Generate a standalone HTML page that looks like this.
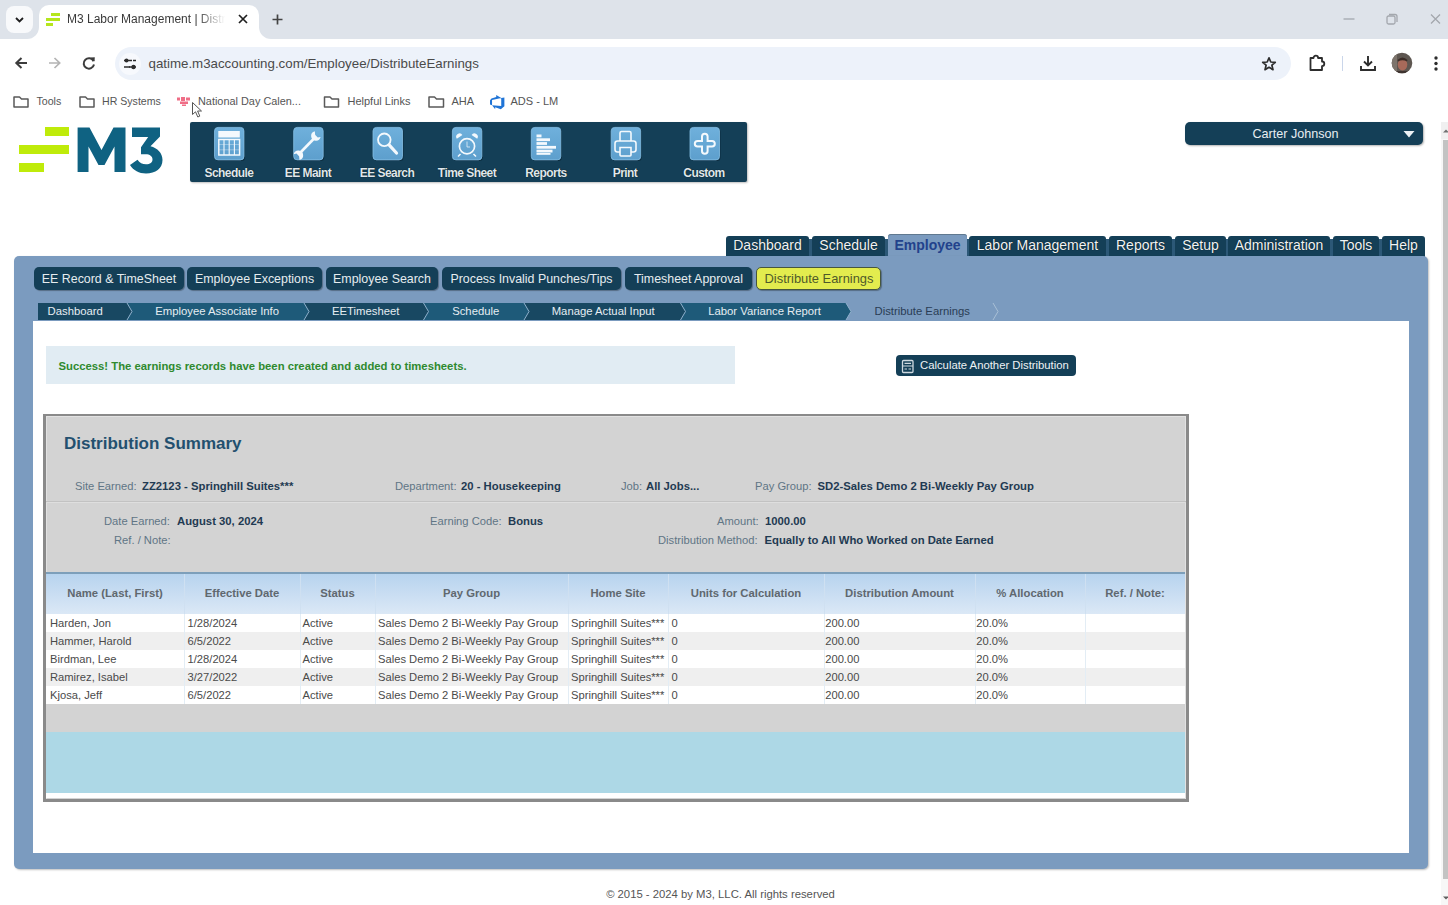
<!DOCTYPE html>
<html><head><meta charset="utf-8">
<style>
*{margin:0;padding:0;box-sizing:border-box}
html,body{width:1448px;height:905px;overflow:hidden}
body{position:relative;font-family:"Liberation Sans",sans-serif;background:#fff;color:#333}
.a{position:absolute}
.t{position:absolute;white-space:nowrap}
/* chrome */
#strip{left:0;top:0;width:1448px;height:39px;background:#dee3ea}
#acttab{left:39px;top:5px;width:220px;height:35px;background:#fff;border-radius:10px 10px 0 0}
#addr{left:0;top:39px;width:1448px;height:46px;background:#fff}
#omni{left:115px;top:47px;width:1176px;height:33px;background:#edf2fa;border-radius:17px}
/* app */
.nav{background:#143f57}
#toolbar{left:190px;top:122px;width:557px;height:60px;background:#143f57;border-radius:2px;box-shadow:1px 1px 2px rgba(0,0,0,.25)}
.ico{position:absolute;top:5px;width:29px;height:32px;background:#5b9bc6;border-radius:4px;box-shadow:1px 1px 1px rgba(0,0,0,.35)}
.lbl{position:absolute;top:44px;font-size:12px;font-weight:bold;letter-spacing:-0.55px;color:#dfe7ec;white-space:nowrap;text-align:center;width:80px;text-shadow:0 0 1px #000;line-height:15px}
#user{left:1185px;top:122px;width:238px;height:23px;background:#143f57;border-radius:5px;color:#e8eef2;font-size:12.6px;line-height:23px;text-align:center;box-shadow:1px 1px 2px rgba(0,0,0,.3)}
#panel{left:14px;top:256px;width:1414px;height:613px;background:#7b9bbf;border-radius:5px;box-shadow:1px 1px 2px rgba(0,0,0,.25)}
#content{left:33px;top:321px;width:1376px;height:532px;background:#fff}
.mt{position:absolute;top:236px;height:21px;background:#143f57;border-radius:3px 3px 0 0;color:#f0f4f6;font-size:14px;line-height:19px;text-align:center;text-shadow:0 0 1px #000}
.mt.on{background:#7b9bbf;color:#22428c;top:234px;height:23px;text-shadow:none;line-height:22px;font-weight:bold;box-shadow:inset 0 1px 0 #60798f}
.sb{position:absolute;top:267px;height:23px;background:#143f57;border-radius:5px;color:#e6ecef;font-size:12.4px;line-height:24px;text-align:center;box-shadow:1px 1px 1px rgba(0,0,0,.3)}
.sb.on{background:#e3ec4e;color:#4f5a2a;border:1px solid #46563e;line-height:21px;font-size:12.9px;text-indent:1px}

.bc{position:absolute;top:304px;font-size:11.3px;line-height:15px;color:#e6edf2;white-space:nowrap}
#success{left:46px;top:346px;width:689px;height:38px;background:#e1ecf3}
#success span{position:absolute;left:12.5px;top:13px;font-size:11.3px;font-weight:bold;color:#2f8a2f;white-space:nowrap;line-height:14px}
#calc{left:896px;top:355px;width:180px;height:21px;background:#143f57;border-radius:4px;color:#eef2f4;font-size:11.3px;line-height:21px}
#box{left:43px;top:414px;width:1146px;height:388px;background:#d3d3d3;border-style:solid;border-color:#8a8a8a;border-width:2px 3px 3px 3px;box-shadow:inset 1px 1px 0 #e2e2e2, inset -1px 0 0 #e2e2e2}
.lb{position:absolute;font-size:11.2px;color:#607585;white-space:nowrap;line-height:14px}
.vl{position:absolute;font-size:11.3px;font-weight:bold;color:#1f3a52;white-space:nowrap;line-height:14px}
.th{position:absolute;top:586px;font-size:11.3px;font-weight:bold;color:#60686f;white-space:nowrap;text-align:center;line-height:14px}
.td{position:absolute;font-size:11.2px;color:#4a4a4a;white-space:nowrap;line-height:14px}
#footer{left:0;top:887px;width:1441px;text-align:center;font-size:11.3px;color:#555;line-height:14px;padding-left:-0px}
</style></head><body>
<!-- Chrome tab strip -->
<div class="a" id="strip"></div>
<div class="a" id="acttab"></div>
<div class="a" id="addr"></div>
<div class="a" id="omni"></div>

<!-- tab flares -->
<div class="a" style="left:27px;top:27px;width:12px;height:12px;background:#fff"></div>
<div class="a" style="left:27px;top:27px;width:12px;height:12px;background:#dee3ea;border-radius:0 0 12px 0"></div>
<div class="a" style="left:259px;top:27px;width:12px;height:12px;background:#fff"></div>
<div class="a" style="left:259px;top:27px;width:12px;height:12px;background:#dee3ea;border-radius:0 0 0 12px"></div>
<!-- tab dropdown -->
<div class="a" style="left:6px;top:6px;width:27px;height:27px;background:#f8f9fb;border-radius:8px"></div>
<svg class="a" style="left:13px;top:13px" width="13" height="13" viewBox="0 0 13 13"><path d="M3 5 L6.5 8.5 L10 5" fill="none" stroke="#1f1f1f" stroke-width="1.8"/></svg>
<!-- favicon -->
<svg class="a" style="left:45px;top:12px" width="16" height="15" viewBox="0 0 16 15"><rect x="6" y="1" width="9" height="3" fill="#b5e61d"/><rect x="1" y="6" width="14" height="3" fill="#b5e61d"/><rect x="1" y="11" width="7" height="3" fill="#b5e61d"/></svg>
<div class="t" style="left:67px;top:12px;font-size:12px;line-height:15px;color:#3a3a3a;width:160px;overflow:hidden;-webkit-mask-image:linear-gradient(90deg,#000 130px,transparent 158px)">M3 Labor Management | Distribute Earnings</div>
<svg class="a" style="left:237px;top:13px" width="12" height="12" viewBox="0 0 12 12"><path d="M2 2 L10 10 M10 2 L2 10" stroke="#1f1f1f" stroke-width="1.7"/></svg>
<svg class="a" style="left:271px;top:13px" width="13" height="13" viewBox="0 0 13 13"><path d="M6.5 1.5 V11.5 M1.5 6.5 H11.5" stroke="#444" stroke-width="1.7"/></svg>
<!-- window controls -->
<svg class="a" style="left:1340px;top:10px" width="104" height="18" viewBox="0 0 104 18"><path d="M3.5 9 H14.5" stroke="#a3a7ad" stroke-width="1.3"/><rect x="47" y="6" width="8" height="8" rx="1.5" fill="none" stroke="#a3a7ad" stroke-width="1.3"/><path d="M49 4.5 H55 a2 2 0 0 1 2 2 V12" fill="none" stroke="#a3a7ad" stroke-width="1.3"/><path d="M91 4.5 L100 13.5 M100 4.5 L91 13.5" stroke="#a3a7ad" stroke-width="1.3"/></svg>
<!-- nav buttons -->
<svg class="a" style="left:13px;top:55px" width="16" height="16" viewBox="0 0 16 16"><path d="M14 8 H3.5 M8.5 3 L3.3 8 L8.5 13" fill="none" stroke="#3c3c3c" stroke-width="2"/></svg>
<svg class="a" style="left:47px;top:55px" width="16" height="16" viewBox="0 0 16 16"><path d="M2 8 H12.5 M7.5 3 L12.7 8 L7.5 13" fill="none" stroke="#b4b4b4" stroke-width="1.7"/></svg>
<svg class="a" style="left:81px;top:55px" width="16" height="16" viewBox="0 0 16 16"><path d="M12.6 6.2 A5.2 5.2 0 1 0 13 9.5" fill="none" stroke="#3c3c3c" stroke-width="2"/><path d="M9.5 2.5 L13.8 2.2 L13.5 6.5 Z" fill="#3c3c3c"/></svg>
<div class="a" style="left:119px;top:53px;width:22px;height:22px;border-radius:11px;background:#f7f9fd"></div>
<svg class="a" style="left:122px;top:56px" width="16" height="16" viewBox="0 0 16 16"><path d="M2 4.5 H10 M2 11 H8" stroke="#2d2d2d" stroke-width="1.6"/><circle cx="4.5" cy="4.5" r="2" fill="#2d2d2d"/><path d="M7 11 H14 M11 4.5 H14" stroke="#2d2d2d" stroke-width="1.6"/><circle cx="11.5" cy="11" r="2.2" fill="#2d2d2d"/></svg>
<div class="t" style="left:148.5px;top:56px;font-size:13.3px;line-height:16px;color:#4a4a4a">qatime.m3accounting.com/Employee/DistributeEarnings</div>
<!-- right icons -->
<svg class="a" style="left:1261px;top:56px" width="16" height="16" viewBox="0 0 16 16"><path d="M8 1.8 L9.8 6 L14.3 6.3 L10.9 9.2 L12 13.7 L8 11.3 L4 13.7 L5.1 9.2 L1.7 6.3 L6.2 6 Z" fill="none" stroke="#2d2d2d" stroke-width="1.7" stroke-linejoin="round"/></svg>
<svg class="a" style="left:1308px;top:53px" width="19" height="19" viewBox="0 0 19 19"><path d="M2.5 5 H5.5 a2.3 2.3 0 0 1 4.6 0 H14 V8.5 a2.3 2.3 0 0 1 0 4.6 V17 H2.5 Z" fill="none" stroke="#2d2d2d" stroke-width="1.8" stroke-linejoin="round"/></svg>
<div class="a" style="left:1342px;top:56px;width:1px;height:15px;background:#cad6ea"></div>
<svg class="a" style="left:1359px;top:54px" width="18" height="18" viewBox="0 0 18 18"><path d="M9 2 V11 M5 7.5 L9 11.5 L13 7.5" fill="none" stroke="#2d2d2d" stroke-width="1.9"/><path d="M2 12 V16 H16 V12" fill="none" stroke="#2d2d2d" stroke-width="1.9"/></svg>
<svg class="a" style="left:1391px;top:52px" width="22" height="22" viewBox="0 0 22 22"><defs><clipPath id="av"><circle cx="11" cy="11" r="10.3"/></clipPath></defs><g clip-path="url(#av)"><rect width="22" height="22" fill="#5e5751"/><rect x="0" y="0" width="6" height="22" fill="#7d746c"/><ellipse cx="11.5" cy="12.5" rx="4.8" ry="6" fill="#a86a5a"/><path d="M6.5 8 Q11.5 3 16.5 8 L16 9.5 Q11.5 7 7 9.5 Z" fill="#3b2c26"/><rect x="5" y="19" width="13" height="4" fill="#3e3430"/></g></svg>
<svg class="a" style="left:1432px;top:55px" width="8" height="17" viewBox="0 0 8 17"><circle cx="4" cy="3" r="1.7" fill="#2d2d2d"/><circle cx="4" cy="8.5" r="1.7" fill="#2d2d2d"/><circle cx="4" cy="14" r="1.7" fill="#2d2d2d"/></svg>
<!-- bookmarks -->
<svg class="a" style="left:0;top:90px" width="600" height="24" viewBox="0 90 600 24">
<g fill="none" stroke="#5a5a5a" stroke-width="1.5" stroke-linejoin="round">
<path d="M14 97 H19.5 L21.5 99 H28 V107 H14 Z"/>
<path d="M80 97 H85.5 L87.5 99 H94 V107 H80 Z"/>
<path d="M324.5 97 H330 L332 99 H338.5 V107 H324.5 Z"/>
<path d="M429 97 H434.5 L436.5 99 H443.5 V107 H429 Z"/>
</g>
<g transform="translate(489.5,94.5) scale(0.85)"><path d="M17.5 3.6v10.3l-4.2 3.5-6.6-2.4v2.4l-3.7-4.9 10.8.9V4.2zm-3.6.5L7.9.5v2.4L2.3 4.6.6 6.8v4.9l2.4 1V6.4z" fill="#1f74d6"/></g>
<g fill="#ef6d86"><rect x="177" y="97.5" width="3" height="3"/><rect x="181" y="97" width="4" height="4"/><rect x="186" y="97.5" width="4" height="3"/><rect x="180" y="101.5" width="8" height="2.5"/><rect x="182" y="104.5" width="4" height="1.5"/></g>
</svg>
<div class="t" style="left:36.5px;top:94px;font-size:10.6px;line-height:15px;color:#555">Tools</div>
<div class="t" style="left:102px;top:94px;font-size:10.6px;line-height:15px;color:#555">HR Systems</div>
<div class="t" style="left:198px;top:94px;font-size:10.9px;line-height:15px;color:#555">National Day Calen...</div>
<div class="t" style="left:347.5px;top:94px;font-size:11px;line-height:15px;color:#555">Helpful Links</div>
<div class="t" style="left:451.5px;top:94px;font-size:11px;line-height:15px;color:#555">AHA</div>
<div class="t" style="left:510.5px;top:94px;font-size:11px;line-height:15px;color:#555">ADS - LM</div>
<!-- cursor -->
<svg class="a" style="left:191px;top:101px" width="14" height="18" viewBox="0 0 14 18"><path d="M1.5 1.5 V13.5 L4.5 10.8 L6.8 16 L8.8 15.1 L6.6 10 H10.5 Z" fill="#fff" stroke="#555" stroke-width="1"/></svg>


<!-- Logo -->
<div class="a" style="left:45px;top:127px;width:24px;height:9px;background:#bfeb0a"></div>
<div class="a" style="left:19px;top:145px;width:50px;height:9px;background:#bfeb0a"></div>
<div class="a" style="left:19px;top:163px;width:25px;height:9px;background:#bfeb0a"></div>

<svg class="a" style="left:70px;top:120px" width="100" height="60" viewBox="70 120 100 60">
<path d="M77.6 172 V127.5 H89.5 L101.5 150 L113.5 127.5 H125.5 V172 H114.5 V146.5 L104.5 165 H98.5 L88.5 146.5 V172 Z" fill="#0f6282"/>
<path d="M132 127.5 H160 V136.5 L150.5 146.3 C157.5 148 162.5 153.2 162.5 160 C162.5 168.5 155.5 173.5 146 173.5 C139 173.5 133.5 170.5 130 165 L137.5 159.8 C139.5 162.8 142.5 164.3 146 164.3 C150.2 164.3 152.5 162.4 152.5 159.5 C152.5 156.3 150 154.3 145.5 154.3 H141 V147.2 L148.2 137 H132 Z" fill="#0f6282"/>
</svg>
<!-- Toolbar -->
<div class="a" id="toolbar"><svg class="a" style="left:0;top:0" width="557" height="60" viewBox="190 122 557 60"><defs><linearGradient id="ig" x1="0" y1="0" x2="0" y2="1"><stop offset="0" stop-color="#6fb0dc"/><stop offset="1" stop-color="#5d9fcd"/></linearGradient></defs><rect x="215.5" y="128.5" width="29.5" height="32.5" rx="3.5" fill="#0a2636" opacity=".7"/><rect x="214.5" y="127.4" width="29.5" height="32.5" rx="3.5" fill="url(#ig)" stroke="#86c0e6" stroke-width=".8"/><rect x="294.7" y="128.5" width="29.5" height="32.5" rx="3.5" fill="#0a2636" opacity=".7"/><rect x="293.7" y="127.4" width="29.5" height="32.5" rx="3.5" fill="url(#ig)" stroke="#86c0e6" stroke-width=".8"/><rect x="374" y="128.5" width="29.5" height="32.5" rx="3.5" fill="#0a2636" opacity=".7"/><rect x="373" y="127.4" width="29.5" height="32.5" rx="3.5" fill="url(#ig)" stroke="#86c0e6" stroke-width=".8"/><rect x="453.4" y="128.5" width="29.5" height="32.5" rx="3.5" fill="#0a2636" opacity=".7"/><rect x="452.4" y="127.4" width="29.5" height="32.5" rx="3.5" fill="url(#ig)" stroke="#86c0e6" stroke-width=".8"/><rect x="532.3" y="128.5" width="29.5" height="32.5" rx="3.5" fill="#0a2636" opacity=".7"/><rect x="531.3" y="127.4" width="29.5" height="32.5" rx="3.5" fill="url(#ig)" stroke="#86c0e6" stroke-width=".8"/><rect x="612.2" y="128.5" width="29.5" height="32.5" rx="3.5" fill="#0a2636" opacity=".7"/><rect x="611.2" y="127.4" width="29.5" height="32.5" rx="3.5" fill="url(#ig)" stroke="#86c0e6" stroke-width=".8"/><rect x="691" y="128.5" width="29.5" height="32.5" rx="3.5" fill="#0a2636" opacity=".7"/><rect x="690" y="127.4" width="29.5" height="32.5" rx="3.5" fill="url(#ig)" stroke="#86c0e6" stroke-width=".8"/>
<g fill="none" stroke="#f4f9fd">
<!-- calendar -->
<rect x="218.3" y="131" width="21.5" height="6.5" fill="#f4f9fd" stroke="none"/>
<rect x="218.8" y="139.5" width="20.8" height="15.5" stroke-width="1.5"/>
<path d="M224 139.5 V155 M229.2 139.5 V155 M234.4 139.5 V155" stroke-width="1.1"/>
<path d="M218.8 144.5 H239.6 M218.8 149.8 H239.6" stroke-width=".6" opacity=".6"/>
<!-- wrench -->
<path d="M298.5 154.5 L316 136.5" stroke-width="2.6"/>
<path d="M314.8 131.2 a4.8 4.8 0 1 0 5.8 5.8 l-2.8 .6 -2.6-2.6 z" fill="#f4f9fd" stroke="none"/>
<path d="M299.5 160 a4.8 4.8 0 1 0 -5.8 -5.8 l2.8 -.6 2.6 2.6 z" fill="#f4f9fd" stroke="none"/>
<!-- search -->
<circle cx="384.3" cy="139.8" r="6.3" stroke-width="1.8"/>
<path d="M389.3 145.2 L396.5 153" stroke-width="3.2" stroke-linecap="round"/>
<!-- clock -->
<circle cx="467" cy="146.3" r="7.6" stroke-width="1.7"/>
<path d="M467 141.5 V147 H470" stroke-width="1" opacity=".7"/>
<path d="M456.8 138.8 a3.3 3.3 0 0 1 5.6 -3.8 z M477.2 138.8 a3.3 3.3 0 0 0 -5.6 -3.8 z" fill="#f4f9fd" stroke="none"/>
<path d="M460.5 154 L458 156.5 M473.5 154 L476 156.5" stroke-width="1.5"/>
<!-- reports -->
<g fill="#f4f9fd" stroke="none">
<rect x="536.5" y="134.5" width="5" height="2.8"/>
<rect x="536.5" y="138.3" width="13.5" height="2.8"/>
<rect x="536.5" y="142.1" width="10.5" height="2.8"/>
<rect x="536.5" y="145.9" width="19.5" height="2.8"/>
<rect x="536.5" y="149.7" width="16" height="2.8"/>
<rect x="536.5" y="153" width="14" height="1.8"/>
</g>
<!-- print -->
<path d="M620 141 V133 a1.5 1.5 0 0 1 1.5 -1.5 h8 a1.5 1.5 0 0 1 1.5 1.5 V141" stroke-width="1.6"/>
<path d="M620 152 h-2.5 a2.5 2.5 0 0 1 -2.5 -2.5 v-6 a2.5 2.5 0 0 1 2.5 -2.5 h16 a2.5 2.5 0 0 1 2.5 2.5 v6 a2.5 2.5 0 0 1 -2.5 2.5 h-2.5" stroke-width="1.6"/>
<path d="M620 147.5 h11 v7.5 a1 1 0 0 1 -1 1 h-9 a1 1 0 0 1 -1 -1 z" stroke-width="1.6"/>
<!-- custom plus -->
<path d="M702 136.5 a2.8 2.8 0 0 1 5.6 0 V140.9 H712 a2.8 2.8 0 0 1 0 5.6 H707.6 V151 a2.8 2.8 0 0 1 -5.6 0 V146.5 H697.6 a2.8 2.8 0 0 1 0 -5.6 H702 Z" stroke-width="2"/>
</g></svg>
  <div class="lbl" style="left:-1px">Schedule</div>
  <div class="lbl" style="left:78px">EE Maint</div>
  <div class="lbl" style="left:157px">EE Search</div>
  <div class="lbl" style="left:237px">Time Sheet</div>
  <div class="lbl" style="left:316px">Reports</div>
  <div class="lbl" style="left:395px">Print</div>
  <div class="lbl" style="left:474px">Custom</div>
</div>

<div class="a" id="user"><span class="t" style="left:67.5px;top:1px">Carter Johnson</span></div>

<!-- Main tabs -->
<div class="a" style="left:727px;top:239px;width:697px;height:18px;background:#2c5877"></div>
<div class="mt" style="left:726px;width:83px">Dashboard</div>
<div class="mt" style="left:812px;width:73px">Schedule</div>
<div class="mt on" style="left:888px;width:79px">Employee</div>
<div class="mt" style="left:969px;width:137px">Labor Management</div>
<div class="mt" style="left:1109px;width:63px">Reports</div>
<div class="mt" style="left:1175px;width:51px">Setup</div>
<div class="mt" style="left:1228px;width:102px">Administration</div>
<div class="mt" style="left:1333px;width:46px">Tools</div>
<div class="mt" style="left:1382px;width:43px">Help</div>

<div class="a" id="panel"></div>
<div class="a" id="content"></div>

<!-- Sub buttons -->
<div class="sb" style="left:34px;width:150px">EE Record &amp; TimeSheet</div>
<div class="sb" style="left:187px;width:135px">Employee Exceptions</div>
<div class="sb" style="left:326px;width:112px">Employee Search</div>
<div class="sb" style="left:442px;width:179px">Process Invalid Punches/Tips</div>
<div class="sb" style="left:625px;width:127px">Timesheet Approval</div>
<div class="sb on" style="left:756px;width:125px">Distribute Earnings</div>

<svg class="a" style="left:0;top:300px" width="1010" height="24" viewBox="0 300 1010 24"><polygon points="680.2,303 846,303 851,311.5 846,320 680.2,320" fill="#1e5a79"/><polygon points="523.9,303 680.5,303 685.5,311.5 680.5,320 523.9,320" fill="#184862"/><polygon points="423.4,303 524,303 529,311.5 524,320 423.4,320" fill="#1e5a79"/><polygon points="303.6,303 423.5,303 428.5,311.5 423.5,320 303.6,320" fill="#184862"/><polygon points="126.5,303 304,303 309,311.5 304,320 126.5,320" fill="#1e5a79"/><polygon points="38,303 127,303 132,311.5 127,320 38,320" fill="#184862"/><polyline points="127,303 132,311.5 127,320" fill="none" stroke="#8fb0cc" stroke-width="1"/><polyline points="304,303 309,311.5 304,320" fill="none" stroke="#8fb0cc" stroke-width="1"/><polyline points="423.5,303 428.5,311.5 423.5,320" fill="none" stroke="#8fb0cc" stroke-width="1"/><polyline points="524,303 529,311.5 524,320" fill="none" stroke="#8fb0cc" stroke-width="1"/><polyline points="680.5,303 685.5,311.5 680.5,320" fill="none" stroke="#8fb0cc" stroke-width="1"/><polyline points="846,303 851,311.5 846,320" fill="none" stroke="#8fb0cc" stroke-width="1"/><polyline points="993,303 998,311.5 993,320" fill="none" stroke="#a9c0d6" stroke-width="1"/></svg>
<div class="bc" style="left:47.6px">Dashboard</div><div class="bc" style="left:155.3px">Employee Associate Info</div><div class="bc" style="left:332px">EETimesheet</div><div class="bc" style="left:452.2px">Schedule</div><div class="bc" style="left:551.7px">Manage Actual Input</div><div class="bc" style="left:708.2px">Labor Variance Report</div><div class="bc" style="left:874.5px;color:#2a3d55;text-shadow:none">Distribute Earnings</div>
<div class="a" id="success"><span>Success! The earnings records have been created and added to timesheets.</span></div>
<div class="a" id="calc"><span class="t" style="left:24px;top:0">Calculate Another Distribution</span></div>
<div class="a" id="box"></div>
<div class="t" style="left:64px;top:434px;font-size:17px;font-weight:bold;color:#23506f;line-height:20px">Distribution Summary</div>
<div class="lb" style="left:75px;top:479px">Site Earned:</div><div class="vl" style="left:142px;top:479px">ZZ2123 - Springhill Suites***</div>
<div class="lb" style="left:395px;top:479px">Department:</div><div class="vl" style="left:461px;top:479px">20 - Housekeeping</div>
<div class="lb" style="left:621px;top:479px">Job:</div><div class="vl" style="left:646px;top:479px">All Jobs...</div>
<div class="lb" style="left:755px;top:479px">Pay Group:</div><div class="vl" style="left:817.5px;top:479px">SD2-Sales Demo 2 Bi-Weekly Pay Group</div>
<div class="a" style="left:46px;top:501px;width:1140px;height:1px;background:#c2c2c2"></div>
<div class="a" style="left:46px;top:502px;width:1140px;height:1px;background:#dedede"></div>
<div class="lb" style="left:104px;top:514px">Date Earned:</div><div class="vl" style="left:177px;top:514px">August 30, 2024</div>
<div class="lb" style="left:114px;top:533px">Ref. / Note:</div>
<div class="lb" style="left:430px;top:514px">Earning Code:</div><div class="vl" style="left:508px;top:514px">Bonus</div>
<div class="lb" style="left:717px;top:514px">Amount:</div><div class="vl" style="left:765px;top:514px">1000.00</div>
<div class="lb" style="left:658px;top:533px">Distribution Method:</div><div class="vl" style="left:764.5px;top:533px">Equally to All Who Worked on Date Earned</div>
<div class="a" style="left:46px;top:572px;width:1139px;height:2px;background:#7d9fba"></div><div class="a" style="left:46px;top:574px;width:1139px;height:40px;background:linear-gradient(#b7d3ee,#dbe8f6)"></div><div class="a" style="left:184px;top:574px;width:1px;height:40px;background:#cfe0f1"></div><div class="a" style="left:300px;top:574px;width:1px;height:40px;background:#cfe0f1"></div><div class="a" style="left:375px;top:574px;width:1px;height:40px;background:#cfe0f1"></div><div class="a" style="left:568px;top:574px;width:1px;height:40px;background:#cfe0f1"></div><div class="a" style="left:668px;top:574px;width:1px;height:40px;background:#cfe0f1"></div><div class="a" style="left:824px;top:574px;width:1px;height:40px;background:#cfe0f1"></div><div class="a" style="left:975px;top:574px;width:1px;height:40px;background:#cfe0f1"></div><div class="a" style="left:1085px;top:574px;width:1px;height:40px;background:#cfe0f1"></div><div class="th" style="left:46px;width:138px">Name (Last, First)</div><div class="th" style="left:184px;width:116px">Effective Date</div><div class="th" style="left:300px;width:75px">Status</div><div class="th" style="left:375px;width:193px">Pay Group</div><div class="th" style="left:568px;width:100px">Home Site</div><div class="th" style="left:668px;width:156px">Units for Calculation</div><div class="th" style="left:824px;width:151px">Distribution Amount</div><div class="th" style="left:975px;width:110px">% Allocation</div><div class="th" style="left:1085px;width:100px">Ref. / Note:</div><div class="a" style="left:46px;top:614px;width:1139px;height:18px;background:#ffffff"></div><div class="a" style="left:46px;top:632px;width:1139px;height:18px;background:#efefef"></div><div class="a" style="left:46px;top:650px;width:1139px;height:18px;background:#ffffff"></div><div class="a" style="left:46px;top:668px;width:1139px;height:18px;background:#efefef"></div><div class="a" style="left:46px;top:686px;width:1139px;height:18px;background:#ffffff"></div><div class="a" style="left:184px;top:614px;width:1px;height:90px;background:#e3edf5"></div><div class="a" style="left:300px;top:614px;width:1px;height:90px;background:#e3edf5"></div><div class="a" style="left:375px;top:614px;width:1px;height:90px;background:#e3edf5"></div><div class="a" style="left:568px;top:614px;width:1px;height:90px;background:#e3edf5"></div><div class="a" style="left:668px;top:614px;width:1px;height:90px;background:#e3edf5"></div><div class="a" style="left:824px;top:614px;width:1px;height:90px;background:#e3edf5"></div><div class="a" style="left:975px;top:614px;width:1px;height:90px;background:#e3edf5"></div><div class="a" style="left:1085px;top:614px;width:1px;height:90px;background:#e3edf5"></div><div class="td" style="left:50px;top:616px">Harden, Jon</div><div class="td" style="left:187.5px;top:616px">1/28/2024</div><div class="td" style="left:302.5px;top:616px">Active</div><div class="td" style="left:378px;top:616px">Sales Demo 2 Bi-Weekly Pay Group</div><div class="td" style="left:571px;top:616px">Springhill Suites***</div><div class="td" style="left:671.5px;top:616px">0</div><div class="td" style="left:825.2px;top:616px">200.00</div><div class="td" style="left:976.3px;top:616px">20.0%</div><div class="td" style="left:50px;top:634px">Hammer, Harold</div><div class="td" style="left:187.5px;top:634px">6/5/2022</div><div class="td" style="left:302.5px;top:634px">Active</div><div class="td" style="left:378px;top:634px">Sales Demo 2 Bi-Weekly Pay Group</div><div class="td" style="left:571px;top:634px">Springhill Suites***</div><div class="td" style="left:671.5px;top:634px">0</div><div class="td" style="left:825.2px;top:634px">200.00</div><div class="td" style="left:976.3px;top:634px">20.0%</div><div class="td" style="left:50px;top:652px">Birdman, Lee</div><div class="td" style="left:187.5px;top:652px">1/28/2024</div><div class="td" style="left:302.5px;top:652px">Active</div><div class="td" style="left:378px;top:652px">Sales Demo 2 Bi-Weekly Pay Group</div><div class="td" style="left:571px;top:652px">Springhill Suites***</div><div class="td" style="left:671.5px;top:652px">0</div><div class="td" style="left:825.2px;top:652px">200.00</div><div class="td" style="left:976.3px;top:652px">20.0%</div><div class="td" style="left:50px;top:670px">Ramirez, Isabel</div><div class="td" style="left:187.5px;top:670px">3/27/2022</div><div class="td" style="left:302.5px;top:670px">Active</div><div class="td" style="left:378px;top:670px">Sales Demo 2 Bi-Weekly Pay Group</div><div class="td" style="left:571px;top:670px">Springhill Suites***</div><div class="td" style="left:671.5px;top:670px">0</div><div class="td" style="left:825.2px;top:670px">200.00</div><div class="td" style="left:976.3px;top:670px">20.0%</div><div class="td" style="left:50px;top:688px">Kjosa, Jeff</div><div class="td" style="left:187.5px;top:688px">6/5/2022</div><div class="td" style="left:302.5px;top:688px">Active</div><div class="td" style="left:378px;top:688px">Sales Demo 2 Bi-Weekly Pay Group</div><div class="td" style="left:571px;top:688px">Springhill Suites***</div><div class="td" style="left:671.5px;top:688px">0</div><div class="td" style="left:825.2px;top:688px">200.00</div><div class="td" style="left:976.3px;top:688px">20.0%</div><div class="a" style="left:46px;top:704px;width:1139px;height:28px;background:#d3d3d3"></div><div class="a" style="left:46px;top:732px;width:1139px;height:61px;background:#add8e6"></div><div class="a" style="left:46px;top:793px;width:1139px;height:5px;background:#fff"></div><div class="a" id="footer">© 2015 - 2024 by M3, LLC. All rights reserved</div>

<!-- user triangle -->
<svg class="a" style="left:1402px;top:129px" width="14" height="10" viewBox="0 0 14 10"><path d="M1.5 2 H12.5 L7 8.5 Z" fill="#eef2f5"/></svg>
<!-- calc icon -->
<svg class="a" style="left:900px;top:358px" width="16" height="16" viewBox="0 0 16 16"><rect x="2.5" y="2.5" width="10.5" height="12" rx="1" fill="none" stroke="#cfd9e0" stroke-width="1.3"/><path d="M2.5 8 H13 M4.5 11 H7 M8.5 11 H11 M4.5 5.3 H11" stroke="#cfd9e0" stroke-width="1.2"/></svg>
<!-- scrollbar -->
<div class="a" style="left:1441px;top:122px;width:7px;height:783px;background:#f7f7f7"></div>
<div class="a" style="left:1442.5px;top:140px;width:5.5px;height:739px;background:#c3c3c3"></div>
<div class="a" style="left:1441px;top:122px;width:7px;height:17px;background:#f0f0f0"></div><svg class="a" style="left:1442px;top:127px" width="6" height="8" viewBox="0 0 6 8"><path d="M1 5.5 L4 2.5 L7 5.5 Z" fill="#707070"/></svg>
<svg class="a" style="left:1442px;top:894px" width="6" height="8" viewBox="0 0 6 8"><path d="M1 2.5 L4 5.5 L7 2.5 Z" fill="#606060"/></svg>
</body></html>
